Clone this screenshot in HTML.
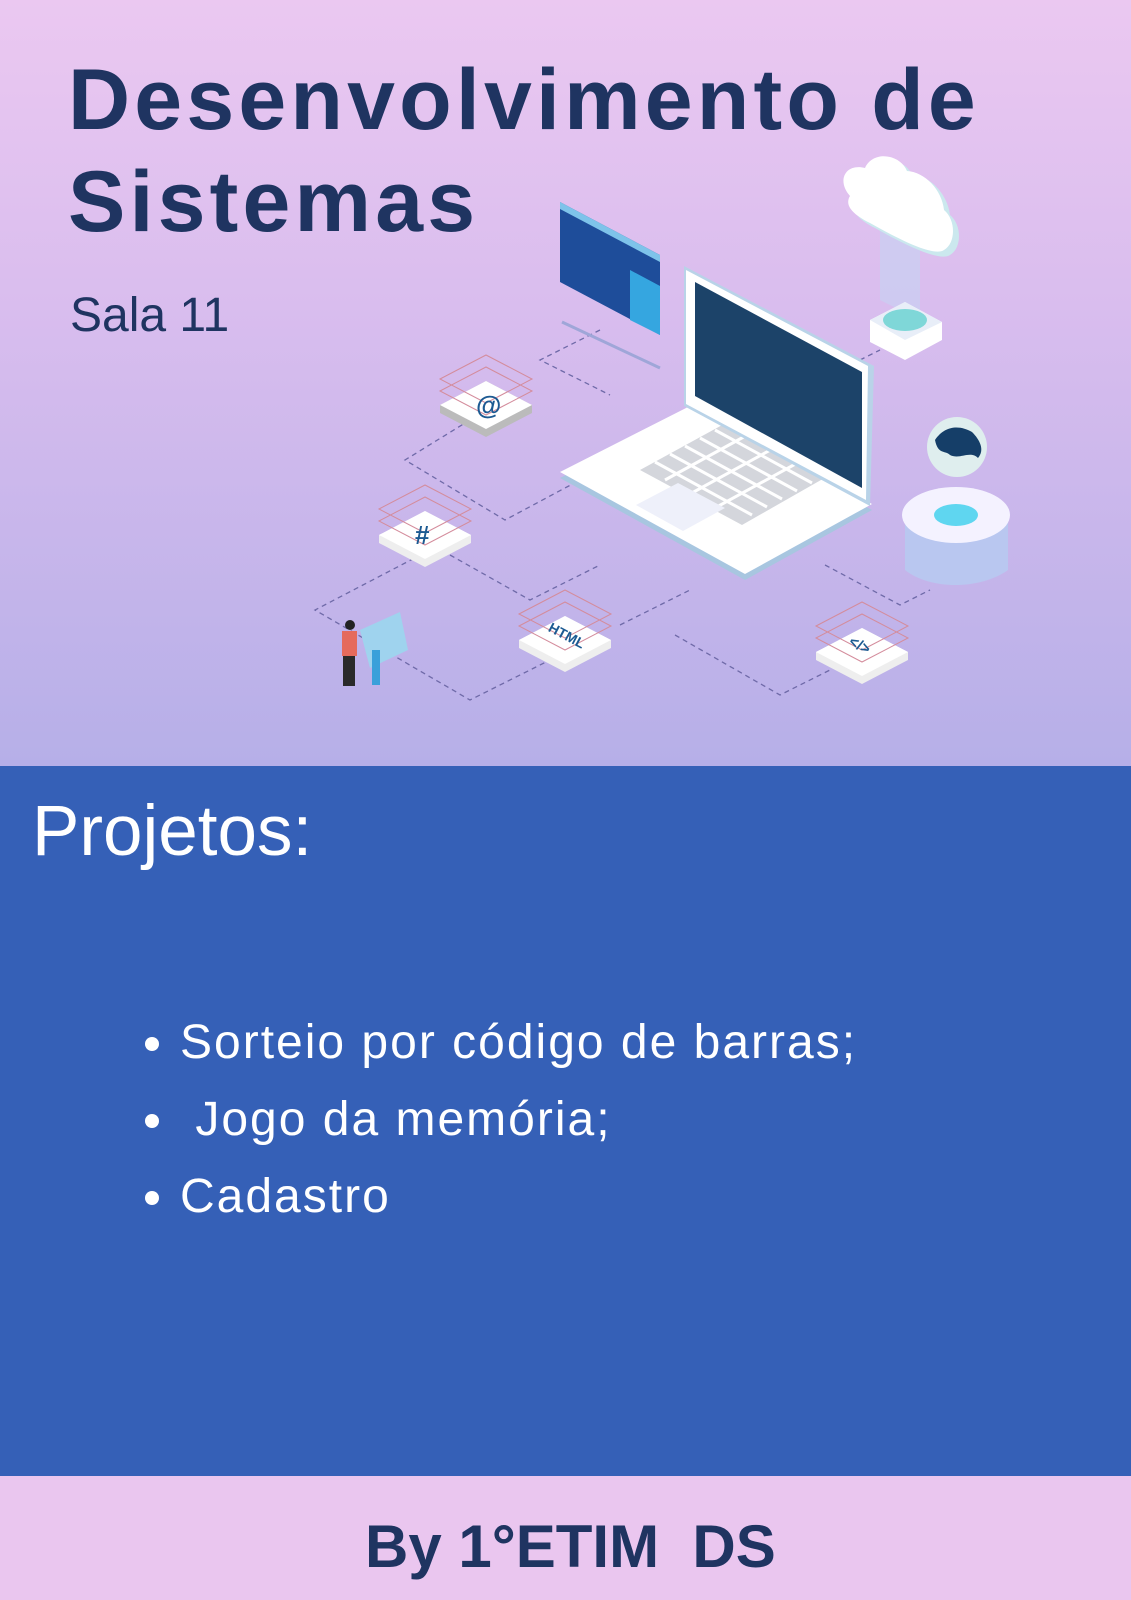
<!DOCTYPE html>
<html><head><meta charset="utf-8"><style>
html,body{margin:0;padding:0}
body{width:1131px;height:1600px;position:relative;overflow:hidden;font-family:"Liberation Sans",sans-serif}
.top{position:absolute;left:0;top:0;width:1131px;height:766px;background:linear-gradient(180deg,#ebc8f1 0%,#d9bdee 40%,#b6afe8 100%)}
.blue{position:absolute;left:0;top:766px;width:1131px;height:710px;background:#3560b7}
.bot{position:absolute;left:0;top:1476px;width:1131px;height:124px;background:#eac6ef}
.t{position:absolute;color:#1f3461;font-weight:bold;font-size:86px;letter-spacing:4.2px;left:68px;line-height:1}
.sala{position:absolute;left:70px;top:292px;font-size:48px;color:#1f3461;line-height:1}
.proj{position:absolute;left:32px;top:796px;font-size:71px;color:#fff;line-height:1}
ul{position:absolute;left:88px;top:1004px;margin:0;padding:0 0 0 92px;color:#fff;font-size:48px;letter-spacing:2px;line-height:77px}
.by{position:absolute;left:365px;top:1517px;font-size:60px;font-weight:bold;color:#1f3461;line-height:1;white-space:nowrap}
</style></head><body>
<div class="top"></div>
<div class="blue"></div>
<div class="bot"></div>
<div class="t" style="top:57px">Desenvolvimento de</div>
<div class="t" style="top:159px">Sistemas</div>
<div class="sala">Sala 11</div>
<svg style="position:absolute;left:0;top:0" width="1131" height="766" viewBox="0 0 1131 766">
<g fill="none" stroke="#6f6aa8" stroke-width="1.3" stroke-dasharray="5 4">
<path d="M600 330 L540 360 L610 395"/>
<path d="M470 420 L405 460 L505 520 L580 480"/>
<path d="M430 550 L315 610 L470 700 L560 655"/>
<path d="M450 555 L530 600 L600 565"/>
<path d="M620 625 L690 590"/>
<path d="M675 635 L780 695 L830 670"/>
<path d="M825 565 L900 605 L930 590"/>
<path d="M860 360 L880 350"/>
</g>
<path d="M560 202 L660 255 L660 335 L560 282Z" fill="#1e4d9a"/>
<path d="M560 202 L660 255 L660 262 L560 209Z" fill="#7ec3ea"/>
<path d="M630 270 L660 286 L660 335 L630 320Z" fill="#35a6e0"/>
<path d="M562 322 L660 368" stroke="#9fa6d8" stroke-width="3"/>
<path d="M560 478 L690 412 L872 510 L745 580Z" fill="#a8c6e0"/>
<path d="M560 472 L690 406 L872 504 L745 574Z" fill="#fff"/>
<path d="M640 470 L735 418 L835 472 L742 525Z" fill="#d4d6dc"/>
<g stroke="#fff" stroke-width="3">
<path d="M655 462 L752 515 M670 454 L767 507 M685 446 L782 499 M700 438 L797 491 M715 430 L812 483"/>
<path d="M665 480 L760 428 M690 494 L785 442 M715 508 L810 456"/>
</g>
<path d="M636 505 L678 483 L725 508 L683 531Z" fill="#eef0fa"/>
<path d="M684 266 L874 366 L870 506 L684 406Z" fill="#b9d3e8"/>
<path d="M686 270 L868 366 L866 500 L686 404Z" fill="#fff"/>
<path d="M695 282 L862 372 L862 488 L695 396Z" fill="#1c4369"/>
<path d="M880 300 L920 320 L920 250 L880 230Z" fill="#c9d0f2" opacity=".7"/>
<path d="M855 200 C840 185 850 168 870 172 C878 155 905 158 912 175 C930 175 948 195 950 215 C962 225 962 248 950 255 C940 262 905 245 875 228 C855 218 850 208 855 200Z" fill="#cbe8ee"/>
<path d="M850 196 C836 180 846 163 865 168 C873 150 900 154 907 171 C925 172 942 190 944 210 C956 220 956 243 944 250 C934 257 900 240 870 223 C850 213 845 204 850 196Z" fill="#fff"/>
<path d="M870 320 L905 302 L942 322 L942 340 L905 360 L870 342Z" fill="#fff"/>
<path d="M870 320 L905 302 L942 322 L905 340Z" fill="#e8eef8"/>
<ellipse cx="905" cy="320" rx="22" ry="11" fill="#7fd7d8"/>
<circle cx="957" cy="447" r="30" fill="#dfeeee"/>
<path d="M935 440 C945 425 960 425 972 432 C980 440 985 450 978 458 C970 450 960 460 950 455 C945 450 938 455 935 440Z" fill="#153e68"/>
<path d="M905 515 L905 570 C930 590 980 590 1008 570 L1008 515Z" fill="#b9c7f0"/>
<ellipse cx="956" cy="515" rx="54" ry="28" fill="#f4f2ff"/>
<ellipse cx="956" cy="515" rx="22" ry="11" fill="#5fd6f0"/>
<g transform="translate(486,405)"><path d="M-46 0 L0 -24 L46 0 L46 8 L0 32 L-46 8Z" fill="#bbb"/><path d="M-46 0 L0 -24 L46 0 L0 24Z" fill="#fff"/><path d="M-46 -14 L0 -38 L46 -14 L0 10Z M-46 -26 L0 -50 L46 -26 L0 -2Z" fill="none" stroke="#d48c9c" stroke-width="1"/><text x="-10" y="9" font-size="26" font-weight="bold" fill="#1c5a92" font-family="Liberation Sans">@</text></g>
<g transform="translate(425,535)"><path d="M-46 0 L0 -24 L46 0 L46 8 L0 32 L-46 8Z" fill="#eee"/><path d="M-46 0 L0 -24 L46 0 L0 24Z" fill="#fff"/><path d="M-46 -14 L0 -38 L46 -14 L0 10Z M-46 -26 L0 -50 L46 -26 L0 -2Z" fill="none" stroke="#d48c9c" stroke-width="1"/><text x="-10" y="9" font-size="26" font-weight="bold" fill="#1c5a92" font-family="Liberation Sans">#</text></g>
<g transform="translate(565,640)"><path d="M-46 0 L0 -24 L46 0 L46 8 L0 32 L-46 8Z" fill="#eee"/><path d="M-46 0 L0 -24 L46 0 L0 24Z" fill="#fff"/><path d="M-46 -14 L0 -38 L46 -14 L0 10Z M-46 -26 L0 -50 L46 -26 L0 -2Z" fill="none" stroke="#d48c9c" stroke-width="1"/><text x="-20" y="0" font-size="14" font-weight="bold" fill="#1c5a92" font-family="Liberation Sans" transform="rotate(28)">HTML</text></g>
<g transform="translate(862,652)"><path d="M-46 0 L0 -24 L46 0 L46 8 L0 32 L-46 8Z" fill="#eee"/><path d="M-46 0 L0 -24 L46 0 L0 24Z" fill="#fff"/><path d="M-46 -14 L0 -38 L46 -14 L0 10Z M-46 -26 L0 -50 L46 -26 L0 -2Z" fill="none" stroke="#d48c9c" stroke-width="1"/><text x="-16" y="0" font-size="15" font-weight="bold" fill="#1c5a92" font-family="Liberation Sans" transform="rotate(28)">&lt;/&gt;</text></g>
<path d="M360 630 L400 612 L408 650 L370 668Z" fill="#9fd3ee"/>
<rect x="372" y="650" width="8" height="35" fill="#3aa0da"/>
<circle cx="350" cy="625" r="5" fill="#222"/>
<rect x="342" y="631" width="15" height="25" fill="#e56a5c"/>
<rect x="343" y="656" width="12" height="30" fill="#2a2a2a"/>
</svg>
<div class="proj">Projetos:</div>
<ul><li>Sorteio por código de barras;</li><li>&nbsp;Jogo da memória;</li><li>Cadastro</li></ul>
<div class="by">By 1°ETIM&nbsp; DS</div>
</body></html>
